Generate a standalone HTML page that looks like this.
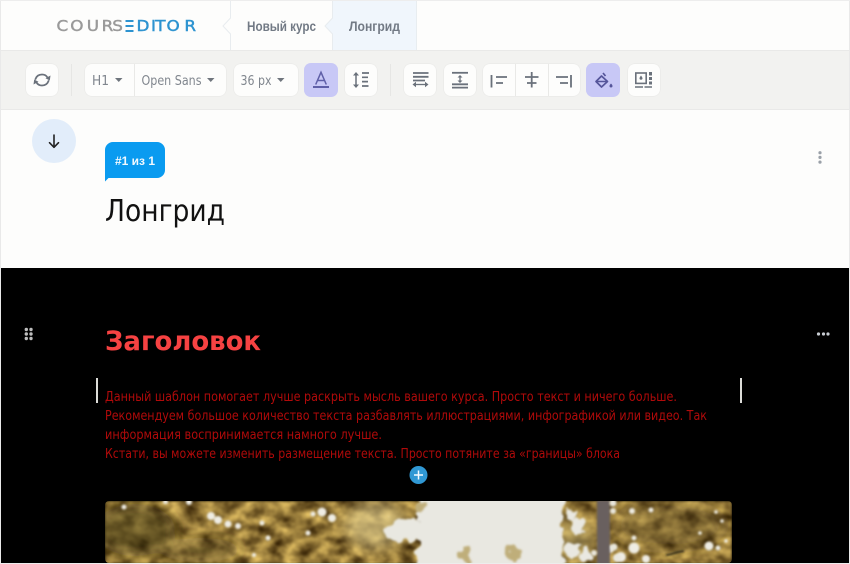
<!DOCTYPE html>
<html><head><meta charset="utf-8"><style>
html,body{margin:0;padding:0;background:#fff}
body{width:850px;height:564px;overflow:hidden}
svg{display:block}
text{font-family:"Liberation Sans","DejaVu Sans",sans-serif}
.d{font-family:"DejaVu Sans","Liberation Sans",sans-serif}
</style></head><body>
<svg width="850" height="564" viewBox="0 0 850 564" xmlns="http://www.w3.org/2000/svg">
<defs>
<filter id="tx" filterUnits="userSpaceOnUse" x="105" y="501" width="627" height="63" color-interpolation-filters="sRGB">
<feTurbulence type="fractalNoise" baseFrequency=".06 .08" numOctaves="3" seed="7"/>
<feColorMatrix type="matrix" values="1.100 0 0 0 .03  1.000 0 0 0 -.03  .600 0 0 0 -.08  0 0 0 0 1"/>
<feGaussianBlur stdDeviation="1"/>
</filter>
<filter id="disp" filterUnits="userSpaceOnUse" x="60" y="470" width="720" height="130" color-interpolation-filters="sRGB">
<feTurbulence type="fractalNoise" baseFrequency=".1" numOctaves="2" seed="11" result="n"/>
<feDisplacementMap in="SourceGraphic" in2="n" scale="14" xChannelSelector="R" yChannelSelector="G"/>
<feGaussianBlur stdDeviation="1"/>
</filter>
<filter id="b1" filterUnits="userSpaceOnUse" x="60" y="470" width="720" height="130"><feGaussianBlur stdDeviation="7"/></filter>
<filter id="b2" filterUnits="userSpaceOnUse" x="60" y="470" width="720" height="130"><feGaussianBlur stdDeviation="1"/></filter>
<filter id="sh" x="-20%" y="-20%" width="140%" height="140%"><feDropShadow dx="0" dy="0" stdDeviation="0.6" flood-color="#000" flood-opacity=".12"/></filter>
<clipPath id="ic"><rect x="105" y="501" width="627" height="62" rx="4"/></clipPath>
</defs>
<rect width="850" height="564" fill="#fdfdfc"/>
<!-- header -->
<rect x="332" y="0" width="84" height="50" fill="#f0f6fc"/>
<path d="M230.500 0V18L223 26L230.500 34V50" fill="#fdfdfc" stroke="#e8ecef"/>
<path d="M332.500 0V18L325 26L332.500 34V50" fill="#f0f6fc" stroke="#e8ecef"/>
<line x1="416.500" y1="0" x2="416.500" y2="50" stroke="#e8edf0"/>
<text class="d" transform="translate(56.500 31) scale(1.120 1)" x="0 12.300 27 40.300 49.800" y="0" font-size="15" fill="#9a9a9a" stroke="#9a9a9a" stroke-width=".45">COURS</text>
<g fill="#2d93d0"><rect x="125.500" y="20" width="8" height="2"/><rect x="125.500" y="25" width="8" height="2"/><rect x="125.500" y="30" width="8" height="2"/></g>
<text class="d" transform="translate(136.500 31) scale(1.120 1)" x="0 13 16.800 26.800 42.800" y="0" font-size="15" fill="#2d93d0" stroke="#2d93d0" stroke-width=".45">DITOR</text>
<text x="247" y="31" font-size="13.500" font-weight="700" fill="#727a85" textLength="69" lengthAdjust="spacingAndGlyphs">Новый курс</text>
<text x="349" y="31" font-size="13.500" font-weight="700" fill="#727a85" textLength="51" lengthAdjust="spacingAndGlyphs">Лонгрид</text>
<!-- toolbar -->
<rect x="0" y="50" width="850" height="60" fill="#f2f2f0"/>
<line x1="0" y1="50.500" x2="850" y2="50.500" fill="none" stroke="#e9e9e8"/>
<line x1="0" y1="109.500" x2="850" y2="109.500" stroke="#e9e9e8"/>
<line x1="71.500" y1="64" x2="71.500" y2="96" stroke="#e6e6e4"/>
<line x1="390.500" y1="64" x2="390.500" y2="96" stroke="#e6e6e4"/>
<g fill="#fdfdfc" filter="url(#sh)">
<rect x="26" y="64" width="32" height="32" rx="7"/>
<rect x="85" y="64" width="141" height="32" rx="7"/>
<rect x="234" y="64" width="64" height="32" rx="7"/>
<rect x="345" y="64" width="32" height="32" rx="7"/>
<rect x="404" y="64" width="32" height="32" rx="7"/>
<rect x="444" y="64" width="32" height="32" rx="7"/>
<rect x="483" y="64" width="97" height="32" rx="7"/>
<rect x="628" y="64" width="32" height="32" rx="7"/>
</g>
<rect x="304" y="63" width="34" height="34" rx="7" fill="#c8c8f6"/>
<rect x="586" y="63" width="34" height="34" rx="7" fill="#c8c8f6"/>
<g stroke="#e9e9e7"><line x1="134.500" y1="64" x2="134.500" y2="96"/><line x1="515.500" y1="64" x2="515.500" y2="96"/><line x1="548.500" y1="64" x2="548.500" y2="96"/></g>
<!-- refresh -->
<g fill="none" stroke="#6a717b" stroke-width="1.800" stroke-linecap="round" stroke-linejoin="round">
<path d="M35.500 79c1-2.800 3.500-4.500 6.500-4.500 2.600 0 4.500 1.200 5.600 3.200"/>
<path d="M48.500 81c-1 2.800-3.500 4.500-6.500 4.500-2.600 0-4.500-1.200-5.600-3.200"/>
</g>
<path d="M50.500 75.500l-.7 5-4.300-2.300zM33.500 84.500l.7-5 4.300 2.300z" fill="#6a717b"/>
<text class="d" x="92" y="85" font-size="13.500" fill="#80868e" textLength="17" lengthAdjust="spacingAndGlyphs">H1</text>
<path d="M115 78h7.500l-3.750 4z" fill="#6f757d"/>
<text class="d" x="141.500" y="85" font-size="13.500" fill="#80868e" textLength="60" lengthAdjust="spacingAndGlyphs">Open Sans</text>
<path d="M207 78h7.500l-3.750 4z" fill="#6f757d"/>
<text class="d" x="240.500" y="85" font-size="13.500" fill="#80868e" textLength="31" lengthAdjust="spacingAndGlyphs">36 px</text>
<path d="M277 78h7.500l-3.750 4z" fill="#6f757d"/>
<path d="M315.700 84.500L321 72.300l5.300 12.200M317.500 80.500h7" fill="none" stroke="#5f5fa8" stroke-width="1.500"/>
<rect x="313" y="86" width="16" height="2" fill="#5f5fa8"/>
<!-- line height -->
<g fill="none" stroke="#6a717b">
<path d="M356 74v12" stroke-width="1.500"/>
<path d="M353 75.500l3-3.500 3 3.500zM353 84.500l3 3.500 3-3.500z" fill="#6a717b" stroke="none"/>
<path d="M362 73h7M362 77.300h6M362 81.600h6M362 86h6.500" stroke-width="1.700"/>
</g>
<!-- block width -->
<g stroke="#6a717b" fill="none">
<path d="M413 73h15.500M413 76.800h15.500M413 80.500h12" stroke-width="1.800"/>
<path d="M415 84.500h11" stroke-width="1.300"/><path d="M412.500 84.500l3.500-2.700v5.400zM428.500 84.500l-3.500-2.700v5.400z" fill="#6a717b" stroke="none"/>
</g>
<!-- height -->
<g stroke="#6a717b" fill="none">
<path d="M452 72.800h16" stroke-width="1.800"/><path d="M452 84.300h16M452 87.600h16" stroke-width="1.800"/>
<path d="M460 76v6" stroke-width="1.300"/><path d="M457.500 77.500l2.500-2.500 2.500 2.500zM457.500 80.500l2.500 2.500 2.500-2.500z" fill="#6a717b" stroke="none"/>
</g>
<!-- aligns -->
<g stroke="#6a717b" stroke-width="1.800" fill="none">
<path d="M491.500 75v12.500M496 77h11M496 83h7"/>
<path d="M531.700 72v15.500M525 77h13.500M527 83h9.500"/>
<path d="M571 75v12.500M556 77h12M560 83h8"/>
</g>
<!-- fill -->
<g fill="none" stroke="#55559a" stroke-width="1.700" stroke-linejoin="round">
<path d="M603 73l2.500 3M601.500 76l-5.500 5.500 5.500 5.500 6-5.500z"/><path d="M596.500 81.500h10.500" stroke-width="1.500"/>
</g>
<path d="M611 83.500c1 1.200 1.500 1.800 1.500 2.500a1.500 1.500 0 0 1-3 0c0-.7.5-1.300 1.500-2.500z" fill="#55559a"/>
<!-- media -->
<g fill="none" stroke="#6a717b">
<rect x="635.800" y="73" width="10.400" height="10.400" stroke-width="1.600"/>
<path d="M635 87h8M644.500 87h7.500" stroke-width="1.600"/>
<path d="M650.500 72v3.500M650.500 77v3M650.500 81.500v3" stroke-width="3"/>
</g>
<path d="M641 75.500c.9 1.300 1.500 2 1.500 2.800a1.500 1.500 0 0 1-3 0c0-.8.600-1.500 1.500-2.800z" fill="#6a717b"/>
<!-- white block -->
<circle cx="54" cy="141" r="22" fill="#e2edfa"/>
<g fill="none" stroke="#222" stroke-width="1.600" stroke-linecap="round" stroke-linejoin="round"><path d="M54 135v12"/><path d="M49.500 142.700L54 147.300l4.500-4.600"/></g>
<path d="M105 150a8 8 0 0 1 8-8h44a8 8 0 0 1 8 8v20a8 8 0 0 1-8 8h-48.500l-3.500 3.500z" fill="#0a9bf0"/>
<text x="115" y="165" font-size="12" font-weight="700" fill="#f2f9fe" textLength="40" lengthAdjust="spacing">#1 из 1</text>
<text class="d" x="105" y="221" font-size="30" fill="#111" textLength="120" lengthAdjust="spacingAndGlyphs">Лонгрид</text>
<g fill="#9aa0a8"><circle cx="820" cy="152.700" r="1.600"/><circle cx="820" cy="157.400" r="1.600"/><circle cx="820" cy="162.100" r="1.600"/></g>
<!-- black block -->
<rect x="1" y="268" width="848" height="295" fill="#000"/>
<g fill="#bdbdbd"><circle cx="26.300" cy="329.500" r="1.700"/><circle cx="31" cy="329.500" r="1.700"/><circle cx="26.300" cy="334" r="1.700"/><circle cx="31" cy="334" r="1.700"/><circle cx="26.300" cy="338.500" r="1.700"/><circle cx="31" cy="338.500" r="1.700"/></g>
<g fill="#c8ccd2"><circle cx="818.500" cy="334" r="1.600"/><circle cx="823.500" cy="334" r="1.600"/><circle cx="828" cy="334" r="1.600"/></g>
<text class="d" x="105" y="350" font-size="27" font-weight="700" fill="#f64242" textLength="156" lengthAdjust="spacingAndGlyphs">Заголовок</text>
<rect x="96" y="378" width="2" height="25" fill="#dcdcd8"/>
<rect x="740" y="378" width="2" height="25" fill="#dcdcd8"/>
<g font-size="13" fill="#b00a0a">
<text class="d" x="105" y="401" textLength="572" lengthAdjust="spacingAndGlyphs">Данный шаблон помогает лучше раскрыть мысль вашего курса. Просто текст и ничего больше.</text>
<text class="d" x="105" y="420" textLength="602" lengthAdjust="spacingAndGlyphs">Рекомендуем большое количество текста разбавлять иллюстрациями, инфографикой или видео. Так</text>
<text class="d" x="105" y="439" textLength="277" lengthAdjust="spacingAndGlyphs">информация воспринимается намного лучше.</text>
<text class="d" x="105" y="458" textLength="515" lengthAdjust="spacingAndGlyphs">Кстати, вы можете изменить размещение текста. Просто потяните за «границы» блока</text>
</g>
<circle cx="418.500" cy="475" r="9" fill="#3098d4"/>
<path d="M418.500 470.500v9M414 475h9" stroke="#f4faff" stroke-width="1.500"/>
<!-- image -->
<g clip-path="url(#ic)">
<rect x="105" y="501" width="627" height="63" fill="#8f7a35" filter="url(#tx)"/>
<g filter="url(#b1)">
<ellipse cx="135" cy="530" rx="40" ry="26" fill="#3f3714" opacity=".6"/>
<ellipse cx="200" cy="550" rx="40" ry="12" fill="#4a3f18" opacity=".4"/>
<ellipse cx="375" cy="525" rx="30" ry="24" fill="#d8c88c" opacity=".6"/>
<ellipse cx="670" cy="525" rx="55" ry="24" fill="#5f5020" opacity=".4"/>
<ellipse cx="575" cy="540" rx="18" ry="22" fill="#c0ad70" opacity=".55"/>
</g>
<!-- light area with organic edge -->
<g filter="url(#disp)" fill="#e9e8e1">
<rect x="418" y="490" width="145" height="90"/>
<ellipse cx="405" cy="530" rx="20" ry="12"/>
<circle cx="572" cy="515" r="6"/><circle cx="578" cy="525" r="6"/>
<circle cx="572" cy="550" r="7"/><circle cx="585" cy="556" r="6"/>
</g>
<g filter="url(#disp)" fill="#bfae7a">
<ellipse cx="420" cy="507" rx="6" ry="5"/>
<ellipse cx="466" cy="553" rx="6" ry="9"/>
<ellipse cx="514" cy="553" rx="6" ry="10"/>
</g>
<g fill="#efede4" filter="url(#b2)">
<circle cx="322" cy="512" r="4.500"/><circle cx="332" cy="518" r="4"/><circle cx="211" cy="516" r="4"/><circle cx="218" cy="520" r="4"/><circle cx="228" cy="524" r="3.500"/><circle cx="238" cy="526" r="3"/><circle cx="308" cy="533" r="2.500"/><circle cx="268" cy="538" r="2.500"/><circle cx="124" cy="507" r="2.500"/><circle cx="165" cy="502" r="2"/><circle cx="166" cy="502" r="2"/><circle cx="189" cy="502" r="3"/><circle cx="262" cy="523" r="2.500"/><circle cx="313" cy="514" r="2.500"/>
<circle cx="254" cy="555" r="2"/>
<circle cx="610" cy="549" r="4"/><circle cx="621" cy="557" r="5"/><circle cx="634" cy="548" r="5.500"/><circle cx="646" cy="559" r="4"/><circle cx="709" cy="546" r="4.500"/><circle cx="718" cy="548" r="2.500"/><circle cx="632" cy="511" r="3"/><circle cx="651" cy="510" r="2.500"/><circle cx="634" cy="538" r="2.500"/>
<circle cx="716" cy="512" r="1.800"/><circle cx="722" cy="521" r="1.800"/><circle cx="700" cy="533" r="1.800"/><circle cx="726" cy="541" r="1.800"/>
</g>
<rect x="597" y="500" width="13" height="65" fill="#69615f" filter="url(#b2)"/>
<g fill="#e9e7dd" filter="url(#b2)"><circle cx="613" cy="503" r="3.500"/><circle cx="613" cy="511" r="3"/><circle cx="614" cy="547" r="3.500"/><circle cx="617" cy="558" r="4"/><circle cx="594" cy="553" r="3"/></g>
<path d="M666 555c6 0 8-3 18-4" stroke="#2c2818" stroke-width="2" fill="none" filter="url(#b2)"/>
</g>
<!-- edges -->
<rect x="0" y="0" width="1" height="564" fill="#e9e9e9"/>
<rect x="849" y="0" width="1" height="564" fill="#e9e9e9"/>
<rect x="0" y="563" width="850" height="1" fill="#ededed"/>
<rect x="0" y="0" width="850" height="1" fill="#ededed"/>
</svg>
</body></html>
